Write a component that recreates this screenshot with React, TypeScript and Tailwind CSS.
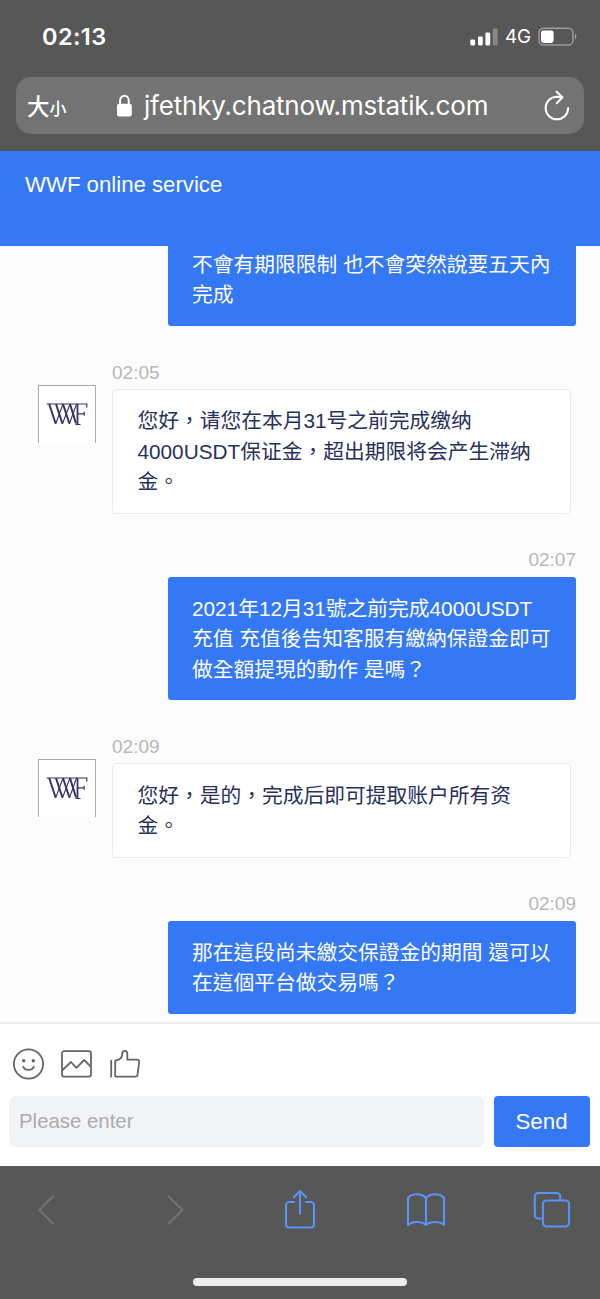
import React from "react";

const chatFont = "font-['Liberation_Sans','Noto_Sans_CJK_TC',sans-serif]";

function StatusBar() {
  return (
    <div className="flex h-[77px] justify-between pl-[42px] pr-[22px] font-[Inter,sans-serif] text-white">
      <div className="flex h-[74px] items-center text-[23.5px] font-semibold tracking-[0.4px]">02:13</div>
      <div className="flex h-[74px] items-center">
        <svg className="block" width="29" height="18" viewBox="0 0 29 18" fill="#fff">
          <rect x="0.3" y="11.4" width="4.8" height="6" rx="1.3" />
          <rect x="8" y="8.4" width="4.8" height="9" rx="1.3" />
          <rect x="15.4" y="4.4" width="4.8" height="13" rx="1.3" />
          <rect x="22.8" y="0.5" width="4.8" height="17" rx="1.3" fillOpacity="0.3" />
        </svg>
        <span className="ml-[6px] w-[33px] pt-px text-[18.8px] tracking-[-0.2px]">4G</span>
        <svg className="block" width="40" height="20" viewBox="0 0 40 20" fill="none">
          <rect x="1" y="1.3" width="34" height="16.8" rx="4.6" stroke="#fff" strokeOpacity="0.4" strokeWidth="1.5" />
          <rect x="3" y="3.5" width="12.6" height="12.4" rx="2.4" fill="#fff" />
          <path d="M36.9 6.8c1.9.8 1.9 5 0 5.8z" fill="#fff" fillOpacity="0.45" />
        </svg>
      </div>
    </div>
  );
}

function AddressBar() {
  return (
    <div className="mx-4 flex h-[57px] items-center rounded-[15px] bg-[#737373] text-white">
      <div className="flex w-[100px] items-baseline pl-[11px] font-['Noto_Sans_CJK_TC',sans-serif] font-medium leading-none">
        <span className="text-[22.5px]">大</span>
        <span className="text-[17px]">小</span>
      </div>
      <svg className="block" width="17" height="24" viewBox="0 0 17 24">
        <rect x="1" y="9.8" width="14.8" height="12.6" rx="2.2" fill="#fff" />
        <path d="M4.1 11V6.4a4.3 4.7 0 0 1 8.6 0V11" fill="none" stroke="#fff" strokeWidth="1.9" />
      </svg>
      <div className="ml-[11px] w-[394px] whitespace-nowrap font-[Inter,sans-serif] text-[26px] tracking-[-0.2px]">jfethky.chatnow.mstatik.com</div>
      <svg className="block shrink-0" width="32" height="34" viewBox="0 0 32 34" fill="none" stroke="#fff" strokeWidth="2" strokeLinecap="round" strokeLinejoin="round">
        <path d="M30.2 19A11.3 11.3 0 1 1 18.9 7.7L24 8.1" />
        <path d="M18.6 2.8 24.4 8.3 18.7 14.2" />
      </svg>
    </div>
  );
}

function Avatar() {
  return (
    <div className="-mt-[4px] h-[58px] w-[58px] border-x border-t border-[#a9a9ad] bg-white">
      <svg className="block" width="56" height="57" viewBox="0 0 56 57" fill="none" stroke="#3b3168">
        <path strokeWidth="2" d="M10.2 18 16.6 37.5M17 18 23.4 37.5M24 18 30.4 37.5M31 18 37 37.5" />
        <path strokeWidth="1.1" d="M16.6 38 24 18M23.4 38 31 18M30.4 38 37.5 18" />
        <path strokeWidth="1.8" d="M38.5 18V38.5" />
        <path strokeWidth="1.2" d="M7.5 18H47.8V21.5M39 27.8H45.2M45.2 25.8V29.800M36.500 38.500H41.500" />
      </svg>
    </div>
  );
}

function Lines({ lines }: { lines: string[] }) {
  return (
    <>
      {lines.map((line) => (
        <p key={line} className="whitespace-nowrap">{line}</p>
      ))}
    </>
  );
}

function AgentMessage({ time, lines }: { time: string; lines: string[] }) {
  return (
    <div className="pl-[38px]">
      <div className="h-[34px] pl-[74px] text-[19px] leading-[36px] text-[#b7b7b7]">{time}</div>
      <div className="flex items-start gap-4">
        <Avatar />
        <div className="w-[459px] rounded-[4px] border border-[#ececee] bg-white px-[24.5px] pt-[16.6px] pb-[15.4px] text-[20.75px] leading-[30.5px] text-[#29305c]">
          <Lines lines={lines} />
        </div>
      </div>
    </div>
  );
}

function UserMessage({ time, lines }: { time?: string; lines: string[] }) {
  return (
    <div className="flex flex-col items-end pr-6">
      {time && <div className="h-[34px] text-[19px] leading-[34px] text-[#b7b7b7]">{time}</div>}
      <div className="w-[408px] rounded-[3px] bg-[#3478f6] px-6 pt-[16.6px] pb-[15.4px] text-[20.75px] leading-[30.5px] text-white">
        <Lines lines={lines} />
      </div>
    </div>
  );
}

function Composer() {
  return (
    <div className="h-[144px] border-t-2 border-[#ededed] bg-white">
      <div className="flex h-[72px] items-center gap-[16px] pl-3 pt-[8px] text-[#666]">
        <svg width="32" height="32" viewBox="0 0 32 32" fill="none" stroke="currentColor" strokeWidth="1.8" strokeLinecap="round">
          <circle cx="16.5" cy="16" r="14.6" />
          <path d="M11.2 18.8c2 4 8.6 4 10.6 0" />
          <circle cx="11.7" cy="12.8" r="1.7" fill="currentColor" stroke="none" />
          <circle cx="21.3" cy="12.8" r="1.7" fill="currentColor" stroke="none" />
        </svg>
        <svg width="32" height="32" viewBox="0 0 32 32" fill="none" stroke="currentColor" strokeWidth="1.8" strokeLinejoin="round">
          <rect x="2" y="3.2" width="29" height="25.4" rx="2" />
          <path d="M2 22.5 11 14 16.4 19.8 24.2 12 31 18.8" />
        </svg>
        <svg width="32" height="32" viewBox="0 0 32 32" fill="none" stroke="currentColor" strokeWidth="1.8" strokeLinejoin="round" strokeLinecap="round">
          <path d="M3.2 12.7V28.7M7.2 12.7V27.7a1 1 0 0 0 1 1H27.5a2 2 0 0 0 2-1.7L31.2 14a2 2 0 0 0-2-2.3H19.3V5.5c0-3.6-5-3.6-5 0C14.3 9.7 12 12 7.2 12.7" />
        </svg>
      </div>
      <div className="-mt-[0.5px] flex gap-[10px] pl-[9px] pr-[10px]">
        <div className="h-[51px] w-[475px] rounded-[7px] bg-[#f2f3f7] pl-[10px] text-[20.4px] leading-[51px] text-[#ababab]">Please enter</div>
        <button className="h-[51px] w-[96px] rounded-[4px] bg-[#3478f6] pr-px text-[22.3px] leading-[51px] text-white">Send</button>
      </div>
    </div>
  );
}

function BrowserToolbar() {
  return (
    <div className="flex h-[133px] flex-col bg-[#575757]">
      <div className="flex h-[87px] items-center pl-[36px]">
        <svg width="20" height="32" viewBox="0 0 20 32" fill="none" stroke="#737373" strokeWidth="2"><path d="M17.6 1.8 3.2 16 17.6 30.2" /></svg>
        <svg className="ml-[110px]" width="20" height="32" viewBox="0 0 20 32" fill="none" stroke="#737373" strokeWidth="2"><path d="M2 1.8 16.4 16 2 30.2" /></svg>
        <svg className="ml-[98px]" width="32" height="40" viewBox="0 0 32 40" fill="none" stroke="#5b92f6" strokeWidth="2.1" strokeLinecap="round" strokeLinejoin="round">
          <path d="M10 12H5a3 3 0 0 0-3 3v19.500a3 3 0 0 0 3 3h22a3 3 0 0 0 3-3V15a3 3 0 0 0-3-3h-5M16 24V1.300M9.800 7.300 16 1.100 22.200 7.300" />
        </svg>
        <svg className="ml-[90px]" width="40" height="34" viewBox="0 0 40 34" fill="none" stroke="#5b92f6" strokeWidth="2.1" strokeLinecap="round" strokeLinejoin="round">
          <path d="M20 5C15.500 0 6 0 2 5V32C6 28 15.500 28 20 32 24.500 28 34 28 38 32V5C34 0 24.500 0 20 5V32" />
        </svg>
        <svg className="ml-[87px]" width="38" height="38" viewBox="0 0 38 38" fill="none" stroke="#5b92f6" strokeWidth="2.1">
          <rect x="10" y="9.500" width="26" height="26" rx="3.500" />
          <path d="M10 27.500H5.300a3.500 3.500 0 0 1-3.500-3.500V5.500A3.500 3.500 0 0 1 5.300 2h18.500a3.500 3.500 0 0 1 3.500 3.500V9.500" />
        </svg>
      </div>
      <div className="ml-[193px] mt-[25px] h-2 w-[214px] rounded-full bg-[#efeeee]" />
    </div>
  );
}

export default function App() {
  return (
    <div className={`flex h-[1299px] w-[600px] flex-col overflow-hidden bg-[#fcfcfc] ${chatFont}`}>
      <div className="h-[151px] shrink-0 bg-[#575757]">
        <StatusBar />
        <AddressBar />
      </div>
      <header className="h-[95px] shrink-0 bg-[#3478f6] pl-[25px] text-[22.2px] leading-[67px] text-white">WWF online service</header>
      <main className="flex h-[776px] shrink-0 flex-col gap-[28.75px] overflow-hidden">
        <div className="-mt-[13px]">
          <UserMessage lines={["不會有期限限制 也不會突然說要五天內", "完成"]} />
        </div>
        <AgentMessage time="02:05" lines={["您好，请您在本月31号之前完成缴纳", "4000USDT保证金，超出期限将会产生滞纳", "金。"]} />
        <UserMessage time="02:07" lines={["2021年12月31號之前完成4000USDT", "充值 充值後告知客服有繳納保證金即可", "做全額提現的動作 是嗎？"]} />
        <AgentMessage time="02:09" lines={["您好，是的，完成后即可提取账户所有资", "金。"]} />
        <UserMessage time="02:09" lines={["那在這段尚未繳交保證金的期間 還可以", "在這個平台做交易嗎？"]} />
      </main>
      <Composer />
      <BrowserToolbar />
    </div>
  );
}
